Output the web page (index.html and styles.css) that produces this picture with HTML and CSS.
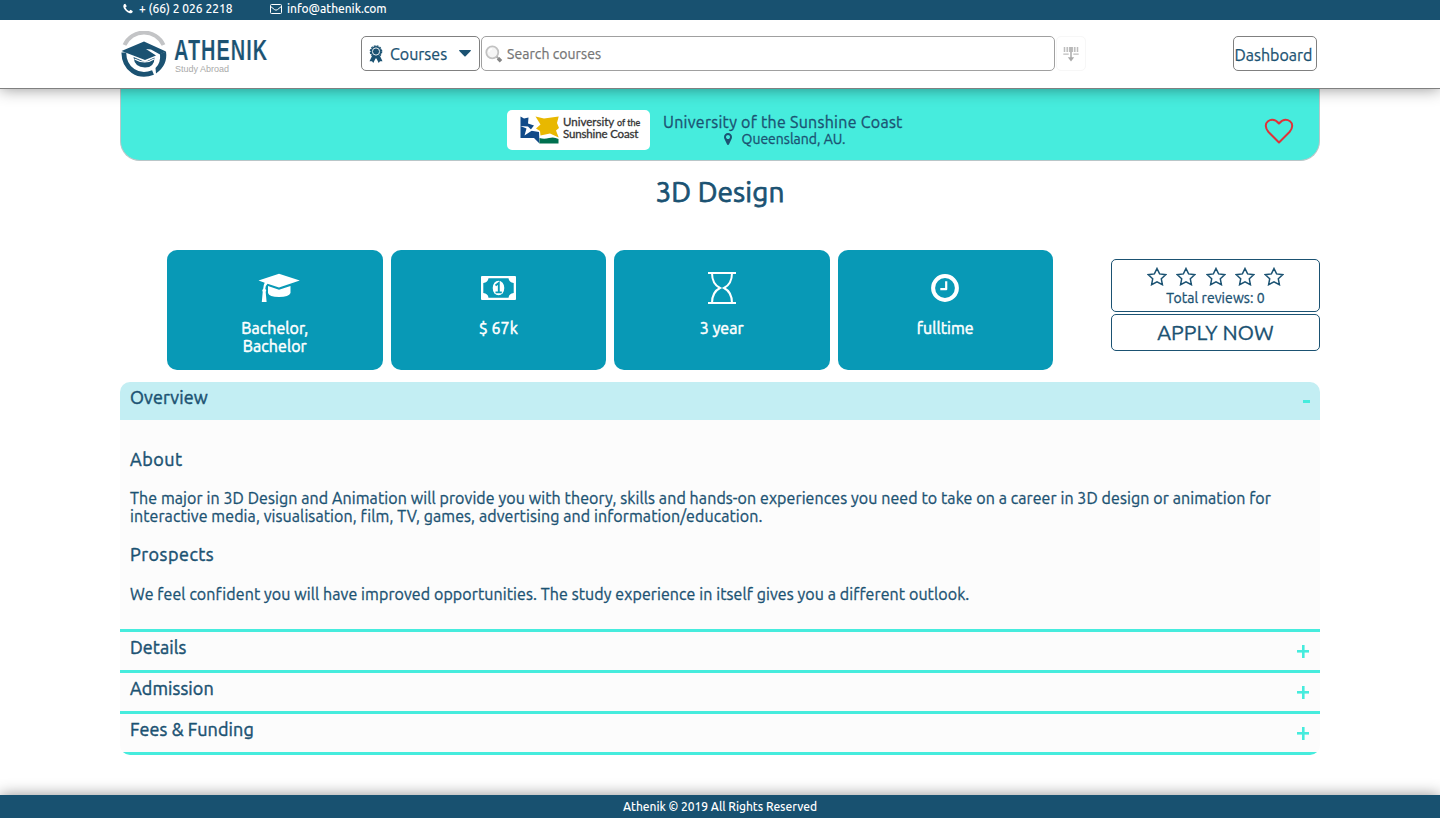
FILE: index.html
```html
<!DOCTYPE html>
<html lang="en">
<head>
<meta charset="utf-8">
<title>Athenik - 3D Design</title>
<link rel="stylesheet" href="styles.css">
</head>
<body>
<header class="header">
  <div class="topbar">
    <a class="contact contact-phone"><svg width="12" height="12" viewBox="0 0 1792 1792"><path fill="currentColor" d="M1600 1240q0 27-10 70.500t-21 68.500q-21 50-122 106-94 51-186 51-27 0-53-3.500t-57.500-12.500-47-14.500-55.500-20.500-49-18q-98-35-175-83-127-79-264-216t-216-264q-48-77-83-175-3-9-18-49t-20.500-55.500-14.500-47-12.500-57.500-3.500-53q0-92 51-186 56-101 106-122 25-11 68.500-21t70.500-10q14 0 21 3 18 6 53 76 11 19 30 54t35 63.500 31 53.500q3 4 17.500 25t21.500 35.500 7 28.500q0 20-28.500 50t-62 55-62 53-28.500 46q0 9 5 22.500t8.500 20.500 14 24 11.500 19q76 137 174 235t235 174q2 1 19 11.500t24 14 20.500 8.500 22.500 5q18 0 46-28.500t53-62 55-62 50-28.500q14 0 28.500 7t35.500 21.500 25 17.500q25 15 53.500 31t63.500 35 54 30q70 35 76 53 3 7 3 21z"/></svg><span class="phone-text">+ (66) 2 026 2218</span></a>
    <a class="contact"><svg width="12" height="10" viewBox="0 0 12 10" fill="none" stroke="currentColor"><rect x=".5" y=".5" width="11" height="9" rx="1"/><path d="M.7 2.500 4.500 5.600Q6 6.800 7.500 5.600L11.300 2.500"/></svg><span class="mail-text">info@athenik.com</span></a>
  </div>
  <div class="navbar">
    <a class="logo">
      <svg width="48" height="48" viewBox="0 0 48 48">
        <path d="M3.500 14A21.500 21.500 0 0 1 42.500 14" fill="none" stroke="#c3c4c6" stroke-width="4"/>
        <path fill="#1b5272" d="M.5 20 23 10.500 45 20.500 39 23.500 30 18.500 25 18 35 24.500 24 29Z"/>
        <path fill="none" stroke="#1b5272" stroke-width="4.800" d="M2.800 21.500Q3 34 12 40T32 41.500"/>
        <path fill="#1b5272" d="M39 23 45 20.500Q47 34 35 42.500L34.500 37Q40 32 39 23Z"/>
        <path fill="#1b5272" d="M12.500 26 24 31 33.500 26.500Q33.500 36.500 24 36.500 13.500 36.500 12.500 26Z"/>
        <path fill="none" stroke="#fff" stroke-width="1.200" d="M13.500 28Q24 34 33 28"/>
      </svg>
      <span class="logo-words"><span class="logo-name">ATHENIK</span><span class="logo-tag">Study Abroad</span></span>
    </a>
    <div class="search">
      <button class="select">
        <svg width="14" height="18" viewBox="0 0 14 18"><path fill="#1b5272" d="M3 11 .5 16.300l2.500-.1L4.300 18l2.200-4.500h1L9.700 18l1.300-1.800 2.500.1L11 11Z"/><circle cx="7" cy="6.500" r="5.400" fill="#1b5272"/><circle cx="7" cy="6.500" r="5.700" fill="none" stroke="#1b5272" stroke-width="1.200" stroke-dasharray="1.900 1.084"/><circle cx="7" cy="6.500" r="3.600" fill="none" stroke="#fff" stroke-width=".9"/></svg>
        <span class="select-label">Courses</span>
        <svg class="caret" width="12" height="7" viewBox="0 0 12 7"><path fill="#1b5272" d="M.6 0h10.800q.9.300.3 1L6.600 6.200q-.6.500-1.200 0L.3 1Q-.3.300.6 0Z"/></svg>
      </button>
      <div class="field">
        <svg width="18" height="18" viewBox="0 0 18 18"><circle cx="7.300" cy="7.300" r="6" fill="#f5f5f5" stroke="#c2c2c2" stroke-width="1.800"/><path d="M4 7Q4 4 7 4" fill="none" stroke="#fff" stroke-width="1.500"/><path d="m11.800 11.800 1.500 1.500" stroke="#aaa" stroke-width="2"/><path d="m13 13.200 3 3" stroke="#858585" stroke-width="3.600"/></svg>
        <span class="placeholder">Search courses</span>
      </div>
      <button class="filter"><svg width="16" height="16" viewBox="0 0 16 16" fill="none" stroke="#bdbdbd"><path d="M1.500 1v5M4.200 1v5M11.800 1v5M14.500 1v5M6.600 1v5M9.400 1v5" stroke-width="1.500"/><path d="M.3 8.200h5.400M10.300 8.200h5.400" stroke-width="1.200"/><path d="M8 1v11" stroke="#aaa" stroke-width="1.500"/><path fill="#aaa" stroke="none" d="M4.800 11.200h6.400L8 15.500Z"/></svg></button>
    </div>
    <a class="dashboard">Dashboard</a>
  </div>
</header>

<main class="page">
  <section class="uni">
    <div class="uni-logo">
      <svg width="40" height="30" viewBox="0 0 40 30"><path fill="#114a88" d="M1.500 1.500 5 3.500 9.500 2.500 9 8.500 15 10.500 11 15.500 20 17 20.500 28.500 15 23H1.500Z"/><path fill="#fff" d="m1.500 11 6 2.500-2 7 7.500-5-4-4Z"/><path fill="#e8b800" d="M16.500 1.500 25 3.500 39.700 1.500 38 8 40 13 37 15.500 39.700 22.500 31 18.500 21.500 20.500 21 16 17 13.500 21.500 9.500Z"/><path fill="#00704f" d="M20.500 23Q25 24.500 30 23T39.500 24V28.500H20.500Z"/></svg>
      <span class="uni-mark"><span>University <small>of the</small></span><span class="mark-two">Sunshine Coast</span></span>
    </div>
    <div class="uni-info">
      <div class="uni-name">University of the Sunshine Coast</div>
      <div class="uni-place"><svg width="14" height="14" viewBox="0 0 1792 1792"><path fill="currentColor" d="M1152 640q0-106-75-181t-181-75-181 75-75 181 75 181 181 75 181-75 75-181zm256 0q0 109-33 179l-364 774q-16 33-47.500 52t-67.500 19-67.500-19-46.500-52l-365-774q-33-70-33-179 0-212 150-362t362-150 362 150 150 362z"/></svg><span>Queensland, AU.</span></div>
    </div>
    <svg class="heart" width="30" height="26" viewBox="0 0 30 26"><path fill="none" stroke="#e0323a" stroke-width="2" stroke-linejoin="round" d="M15 24.500 4.500 14C1 10 1 5.500 4 3.200 7.500.8 11.500 1.500 15 5.500 18.500 1.500 22.500.8 26 3.200 29 5.500 29 10 25.500 14Z"/></svg>
  </section>

  <h1 class="title">3D Design</h1>

  <section class="summary">
    <div class="cards">
      <div class="card"><div class="icon"><svg width="42" height="30" viewBox="0 0 42 30"><path fill="#fff" d="M21 .8 41.800 7.500 21 14.500 9.500 10.800Q7.500 12.500 7.300 15.800 9 17.200 7.700 19L8.600 29H3.800L4.700 19Q3.500 17 5.200 15.800 5.400 12 6.700 9.800L.5 7.500ZM10 13 21 16.800 32.500 13V20Q31 24 21 24 11 24 10 20Z"/></svg></div><p>Bachelor,<br>Bachelor</p></div>
      <div class="card"><div class="icon"><svg width="35" height="24" viewBox="0 0 35 24"><rect width="35" height="24" rx="1" fill="#fff"/><path fill="#0899b6" d="M7.500 2.300h20Q28 6.500 32.700 7v10Q28 17.500 27.500 21.700H7.500Q7 17.500 2.300 17V7Q7 6.500 7.500 2.300Z"/><ellipse cx="17.500" cy="12" rx="5.800" ry="7.300" fill="#fff"/><path fill="none" stroke="#0899b6" stroke-width="1.900" d="M14.500 9.500 17.800 7v9M14.500 16.400h6.300"/></svg></div><p>$ 67k</p></div>
      <div class="card"><div class="icon"><svg width="28" height="32" viewBox="0 0 28 32" fill="none" stroke="#fff" stroke-width="2"><path d="M0 1h28M0 31h28M4 1C4 10 8 14 12 16 8 18 4 22 4 31M24 1C24 10 20 14 16 16 20 18 24 22 24 31"/></svg></div><p>3 year</p></div>
      <div class="card"><div class="icon"><svg width="28" height="28" viewBox="0 0 28 28" fill="none" stroke="#fff"><circle cx="14" cy="14" r="11.900" stroke-width="4"/><path stroke-width="2.200" stroke-linejoin="round" d="M15.200 7.200v8H9.300"/></svg></div><p>fulltime</p></div>
    </div>
    <aside class="actions">
      <div class="reviews">
        <div class="stars">
          <svg width="20" height="19" viewBox="0 0 20 19"><path d="M10 1.500 12.600 6.900 18.700 7.700 14.300 11.800 15.400 17.700 10 14.800 4.600 17.700 5.700 11.800 1.300 7.700 7.400 6.900Z"/></svg>
          <svg width="20" height="19" viewBox="0 0 20 19"><path d="M10 1.500 12.600 6.900 18.700 7.700 14.300 11.800 15.400 17.700 10 14.800 4.600 17.700 5.700 11.800 1.300 7.700 7.400 6.900Z"/></svg>
          <svg width="20" height="19" viewBox="0 0 20 19"><path d="M10 1.500 12.600 6.900 18.700 7.700 14.300 11.800 15.400 17.700 10 14.800 4.600 17.700 5.700 11.800 1.300 7.700 7.400 6.900Z"/></svg>
          <svg width="20" height="19" viewBox="0 0 20 19"><path d="M10 1.500 12.600 6.900 18.700 7.700 14.300 11.800 15.400 17.700 10 14.800 4.600 17.700 5.700 11.800 1.300 7.700 7.400 6.900Z"/></svg>
          <svg width="20" height="19" viewBox="0 0 20 19"><path d="M10 1.500 12.600 6.900 18.700 7.700 14.300 11.800 15.400 17.700 10 14.800 4.600 17.700 5.700 11.800 1.300 7.700 7.400 6.900Z"/></svg>
        </div>
        <div class="total">Total reviews: 0</div>
      </div>
      <button class="apply">APPLY NOW</button>
    </aside>
  </section>

  <section class="accordion">
    <div class="acc-head open"><span>Overview</span><i class="sign minus"></i></div>
    <div class="acc-body">
      <h3>About</h3>
      <p>The major in 3D Design and Animation will provide you with theory, skills and hands-on experiences you need to take on a career in 3D design or animation for<br>interactive media, visualisation, film, TV, games, advertising and information/education.</p>
      <h3>Prospects</h3>
      <p class="closing">We feel confident you will have improved opportunities. The study experience in itself gives you a different outlook.</p>
    </div>
    <div class="acc-head"><span>Details</span><i class="sign plus"></i></div>
    <div class="acc-head"><span>Admission</span><i class="sign plus"></i></div>
    <div class="acc-head"><span>Fees &amp; Funding</span><i class="sign plus"></i></div>
  </section>
</main>
<footer class="footer">Athenik © 2019 All Rights Reserved</footer>
</body>
</html>
```
FILE: styles.css
```css
* { box-sizing: border-box; }
body {
  margin: 0;
  height: 818px;
  overflow: hidden;
  display: flex;
  flex-direction: column;
  background: #fff;
  color: #1b5272;
  font-family: "Ubuntu", "Noto Sans", sans-serif;
  font-size: 16px;
}
svg { display: block; flex: none; }
button { font: inherit; color: inherit; background: #fff; padding: 0; }
.header {
  position: relative;
  z-index: 2;
  height: 89px;
  flex: none;
  background: #fff;
  border-bottom: 1px solid #808080;
  box-shadow: 0 0 15px rgba(0, 0, 0, .43);
}
.topbar {
  height: 20px;
  padding: 0 0 3px 122px;
  display: flex;
  align-items: center;
  background: #185170;
  color: #fff;
  font-size: 12px;
  font-weight: 500;
  line-height: 16px;
}
.contact { display: flex; align-items: center; gap: 5px; white-space: nowrap; }
.contact-phone { width: 148px; }
.mail-text { letter-spacing: -.05px; }
.navbar { height: 68px; display: flex; padding-left: 121px; }
.logo { width: 240px; display: flex; padding-top: 11px; }
.logo-words { display: flex; flex-direction: column; padding: 2px 0 0 5px; }
.logo-name { font: 700 30px/34px "Liberation Sans", sans-serif; white-space: nowrap; transform: scaleX(.665); transform-origin: left; letter-spacing: 1.500px; width: 100px; height: 31px; -webkit-text-stroke: .2px #fff; }
.logo-tag { padding-left: 1px; font: 9px/10px "Liberation Sans", sans-serif; color: #aaa; }
.search { display: flex; gap: 1px; padding-top: 16px; }
.select { width: 119px; height: 35px; border: 1px solid #808080; border-radius: 5px; display: flex; align-items: center; padding-left: 7px; }
.select-label { width: 69px; margin-left: 7px; text-align: left; -webkit-text-stroke: .25px; }
.field { width: 574px; height: 35px; border: 1px solid #a0a0a0; border-radius: 5px; display: flex; align-items: center; gap: 4px; padding-left: 3px; }
.placeholder { font-size: 14px; color: #757575; letter-spacing: .07px; -webkit-text-stroke: .25px; }
.filter { width: 30px; height: 35px; border: 1px solid #f7f7f7; border-radius: 5px; display: grid; place-items: center; }
.dashboard { width: 84px; height: 35px; margin: 16px 0 0 147px; border: 1px solid #808080; border-radius: 5px; padding-left: .5px; line-height: 36px; white-space: nowrap; -webkit-text-stroke: .25px; }

.page { width: 1200px; margin: 0 auto; flex: 1; -webkit-text-stroke: .3px; }
.uni {
  height: 72px;
  display: flex;
  align-items: flex-start;
  background: #46ecdd;
  border: 1px solid #b9c6c8;
  border-top: 0;
  border-radius: 0 0 20px 20px;
  padding: 21px 25px 0 386px;
}
.uni-logo { width: 143px; height: 40px; background: #fff; border-radius: 5px; display: flex; padding: 5px 0 0 12px; }
.uni-mark { display: flex; flex-direction: column; padding: 1px 0 0 4px; color: #333; font: 11.500px/11.500px "Lato", sans-serif; white-space: nowrap; letter-spacing: 0; }
.uni-mark small { font-size: 9px; line-height: 9px; }
.mark-two { letter-spacing: -.15px; }
.uni-info { width: 240px; margin: 3px auto 0 13px; white-space: nowrap; }
.uni-name { line-height: 18px; letter-spacing: .27px; }
.uni-place { display: flex; justify-content: center; gap: 7px; font-size: 14px; line-height: 14px; padding-top: 1px; }
.heart { margin-top: 8px; }
.title { margin: 0; height: 89px; padding-top: 14px; text-align: center; font-size: 28px; line-height: 34px; font-weight: 400; letter-spacing: .1px; -webkit-text-stroke: .75px; }
.summary { display: flex; justify-content: space-between; padding-left: 47px; height: 132px; }
.cards { display: grid; grid-template-columns: repeat(4, 1fr); gap: 8px; width: 886px; height: 120px; }
.card { background: #0899b6; border-radius: 10px; color: #fff; text-align: center; line-height: 18px; letter-spacing: .05px; -webkit-text-stroke: .5px; }
.card p { margin: 0; }
.icon { height: 69px; padding-top: 7px; display: grid; place-items: center; }
.card:first-child .icon { padding-left: 9px; }
.actions { width: 209px; padding-top: 9px; }
.reviews { height: 53px; border: 1px solid #1b5272; border-radius: 5px; text-align: center; }
.stars { display: flex; justify-content: center; gap: 9.400px; padding-top: 7px; fill: none; stroke: #1b5272; stroke-width: 1.500px; }
.total { font-size: 14px; line-height: 25px; letter-spacing: .08px; }
.apply { display: block; width: 209px; height: 37px; margin-top: 2px; padding-bottom: 2px; border: 1px solid #1b5272; border-radius: 5px; font-size: 21.300px; line-height: 32px; }
.accordion { border-radius: 10px; overflow: hidden; }
.acc-head { height: 41px; display: flex; justify-content: space-between; align-items: flex-start; padding: 3px 11px 0 10px; background: #fcfcfc; border-bottom: 3px solid #46ecdd; font-size: 18px; line-height: 24px; letter-spacing: .1px; -webkit-text-stroke: .45px; }
.acc-head.open { height: 38px; padding-right: 10px; background: #c3eef3; border: 0; }
.sign { width: 12px; height: 13px; margin-top: 10px; background: linear-gradient(#46ecdd, #46ecdd) center / 12px 2.600px no-repeat, linear-gradient(#46ecdd, #46ecdd) center / 2.600px 13px no-repeat; }
.sign.minus { width: 7px; height: 3px; margin-top: 15px; background: #46ecdd; }
.acc-body { height: 212px; background: #fcfcfc; border-bottom: 3px solid #46ecdd; padding: 27px 10px 0; }
.acc-body h3 { margin: 0; font-size: 18px; line-height: 24px; font-weight: 400; letter-spacing: .5px; -webkit-text-stroke: .45px; }
.acc-body p { margin: 18px 0 17px; line-height: 18px; white-space: nowrap; letter-spacing: .09px; }
.acc-body .closing { margin-top: 19px; }
.footer { position: relative; height: 23px; flex: none; background: #185170; color: #fff; text-align: center; font-size: 12px; line-height: 24px; font-weight: 500; letter-spacing: -.03px; box-shadow: 0 0 15px rgba(0, 0, 0, .43); }
```
